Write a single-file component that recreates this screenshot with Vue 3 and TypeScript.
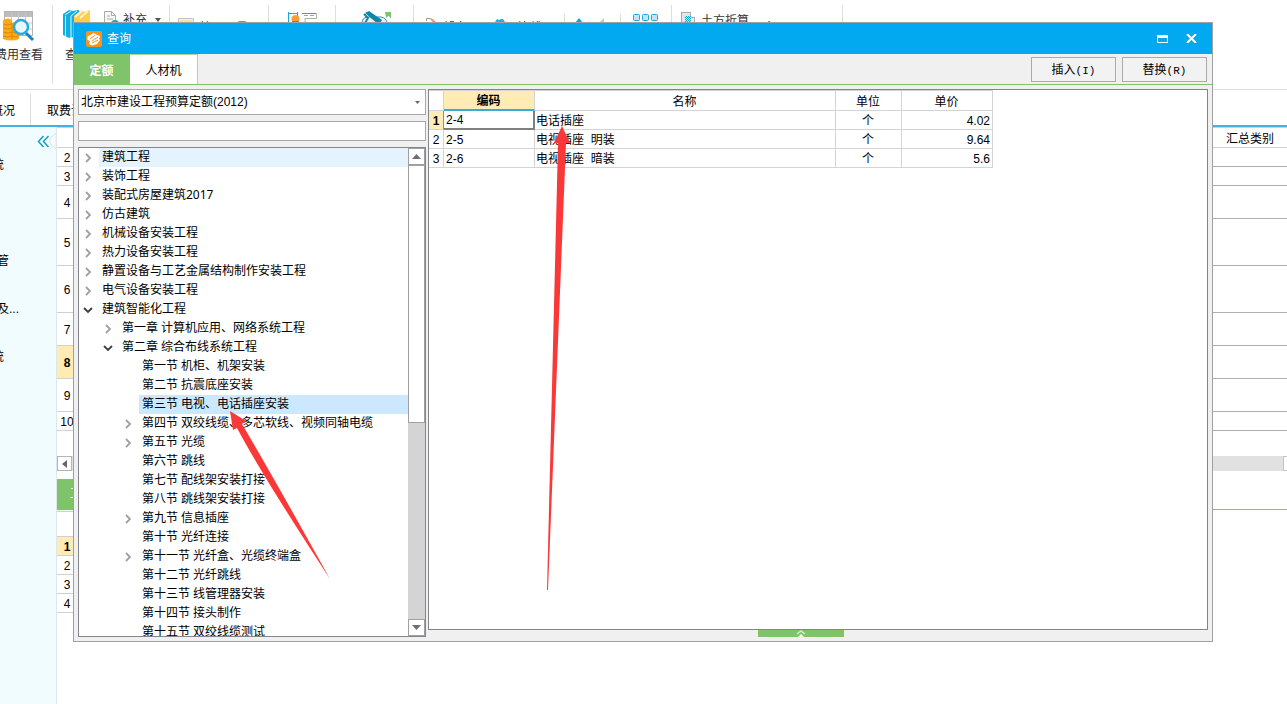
<script setup lang="ts">
import { ref } from 'vue'

interface TreeNode {
  label: string
  level: 1 | 2 | 3
  state: 'open' | 'closed' | 'leaf'
}

interface QuotaItem {
  code: string
  name: string
  unit: string
  price: string
}

interface SheetRow {
  no: number
  size: string
}

const library = ref('北京市建设工程预算定额(2012)')
const keyword = ref('')
const hovered = ref(0)
const selected = ref(13)
const activeRow = ref(0)

const nodes: TreeNode[] = [
  { label: '建筑工程', level: 1, state: 'closed' },
  { label: '装饰工程', level: 1, state: 'closed' },
  { label: '装配式房屋建筑2017', level: 1, state: 'closed' },
  { label: '仿古建筑', level: 1, state: 'closed' },
  { label: '机械设备安装工程', level: 1, state: 'closed' },
  { label: '热力设备安装工程', level: 1, state: 'closed' },
  { label: '静置设备与工艺金属结构制作安装工程', level: 1, state: 'closed' },
  { label: '电气设备安装工程', level: 1, state: 'closed' },
  { label: '建筑智能化工程', level: 1, state: 'open' },
  { label: '第一章 计算机应用、网络系统工程', level: 2, state: 'closed' },
  { label: '第二章 综合布线系统工程', level: 2, state: 'open' },
  { label: '第一节 机柜、机架安装', level: 3, state: 'leaf' },
  { label: '第二节 抗震底座安装', level: 3, state: 'leaf' },
  { label: '第三节 电视、电话插座安装', level: 3, state: 'leaf' },
  { label: '第四节 双绞线缆、多芯软线、视频同轴电缆', level: 3, state: 'closed' },
  { label: '第五节 光缆', level: 3, state: 'closed' },
  { label: '第六节 跳线', level: 3, state: 'leaf' },
  { label: '第七节 配线架安装打接', level: 3, state: 'leaf' },
  { label: '第八节 跳线架安装打接', level: 3, state: 'leaf' },
  { label: '第九节 信息插座', level: 3, state: 'closed' },
  { label: '第十节 光纤连接', level: 3, state: 'leaf' },
  { label: '第十一节 光纤盒、光缆终端盒', level: 3, state: 'closed' },
  { label: '第十二节 光纤跳线', level: 3, state: 'leaf' },
  { label: '第十三节 线管理器安装', level: 3, state: 'leaf' },
  { label: '第十四节 接头制作', level: 3, state: 'leaf' },
  { label: '第十五节 双绞线缆测试', level: 3, state: 'leaf' },
]

const items: QuotaItem[] = [
  { code: '2-4', name: '电话插座', unit: '个', price: '4.02' },
  { code: '2-5', name: '电视插座  明装', unit: '个', price: '9.64' },
  { code: '2-6', name: '电视插座  暗装', unit: '个', price: '5.6' },
]

const sheetRows: SheetRow[] = [
  { no: 2, size: 'small' },
  { no: 3, size: 'small' },
  { no: 4, size: 'medium' },
  { no: 5, size: 'large' },
  { no: 6, size: 'large' },
  { no: 7, size: 'medium' },
  { no: 8, size: 'medium' },
  { no: 9, size: 'medium' },
  { no: 10, size: 'small' },
]
</script>

<template>
  <div class="app">
    <header class="ribbon">
      <div class="group g-fee">
        <button class="big-tool fee" type="button">
          <svg width="34" height="34" viewBox="0 0 34 34">
            <rect x="2.500" y="1.500" width="28" height="24" fill="#fff" stroke="#b4b4b4" />
            <path d="M3 2h27v5H3z" fill="#bdbdbd" />
            <path d="M2 13h28M2 19h28M9.500 2v23M16.500 2v23M23.500 2v23" stroke="#c6c6c6" />
            <path d="M1 10q5-3 9 0v3q4-2 7 0v16q-8 3-16 0z" fill="#fba919" />
            <path d="M1 14q5 2 9 0M1 18q5 2 9 0M1 22q5 2 9 0M1 26q5 2 9 0M10 17q4 2 7 0M10 22q4 2 7 0M10 26q4 2 7 0M10 13v16" stroke="#d98a0a" fill="none" />
            <path d="M24 23l7 7" stroke="#1787bd" stroke-width="3" />
            <circle cx="19" cy="17" r="7" fill="#e6f7fd" stroke="#29abe2" stroke-width="2.500" />
          </svg>
          <span>费用查看</span>
        </button>
      </div>
      <div class="group g-query">
        <button class="big-tool query" type="button">
          <svg width="28" height="34" viewBox="0 0 28 34">
            <path d="M0 4l6-4 4 1 5-1 2 1-5 5v22l-4-1-2 1-6-3z" fill="#12afe3" />
            <path d="M2.500 6v20M8 6v21M2 5l6-4M8 6l6-5" stroke="#d8f4fd" fill="none" />
            <path d="M11 6l8-6 1 2 7-2v20l-9 8-7-2z" fill="#ffcd4d" />
            <path d="M12 7l7-6M17 8l8-7" stroke="#fff3c8" stroke-width="2" />
          </svg>
          <span>查询</span>
        </button>
        <button class="small-tool" type="button">
          <svg width="17" height="16" viewBox="0 0 17 16">
            <path d="M1.500.5h7l4 4V16H1.500z" fill="#f7f7f7" stroke="#aaa" />
            <path d="M8.500.5v4h4M4 5h3M4 8h6" stroke="#aaa" fill="none" />
            <circle cx="12" cy="13" r="4" fill="#1ba8d5" />
          </svg>
          <span>补充</span>
          <svg class="caret" width="6" height="4" viewBox="0 0 6 4"><path d="M0 0h6L3 4z" fill="#555" /></svg>
        </button>
      </div>
      <div class="group g-manage">
        <svg width="18" height="12" viewBox="0 0 18 12">
          <path d="M.5.5h15v11H.5z" fill="#eee" stroke="#c4c4c4" />
          <path d="M2 2h12v5H2z" fill="#f7e2aa" />
        </svg>
        <span class="low">管理用量</span>
      </div>
      <div class="group g-measure">
        <svg width="30" height="14" viewBox="0 0 30 14">
          <path d="M.5 1v13M9.500 1v6M0 2.500h10" stroke="#15a8e0" fill="none" />
          <path d="M14 2.500h14.500v5H17v6" stroke="#b0b0b0" fill="none" />
          <path d="M14 2.500h14" stroke="#15a8e0" />
          <path d="M16 4.500h4M22 4.500h4" stroke="#f09a1a" />
          <circle cx="7.500" cy="8" r="4" fill="#f5a032" />
          <path d="M4 10h7v4H4z" fill="#8b8178" />
        </svg>
      </div>
      <div class="group g-adjust">
        <svg width="32" height="14" viewBox="0 0 32 14">
          <path d="M1 12q0-5 5-6h14q6 1 6 7z" fill="#e8f6fb" stroke="#139bc9" />
          <path d="M4 2l4-2 13 9-3 5z" fill="#0f87a9" />
          <path d="M3 3l4 4-3 5" stroke="#1687a6" stroke-width="2" fill="none" />
          <path d="M24 1h6v7q-1-3-3-3l-2 2z" fill="#7cc36a" />
        </svg>
      </div>
      <div class="group g-device">
        <svg width="13" height="10" viewBox="0 0 13 10">
          <path d="M.5 3V.5h4L12 8" stroke="#999" fill="none" />
          <path d="M5 1l7 6" stroke="#f09a34" stroke-width="2" />
        </svg>
        <span class="low">设备</span>
        <svg class="gear" width="10" height="8" viewBox="0 0 10 8"><path d="M0 8V3l2-3 2 1 2-1 2 0 2 3v5z" fill="#1fb1df" /></svg>
        <span class="low">连线</span>
      </div>
      <div class="group g-move">
        <svg width="32" height="8" viewBox="0 0 32 8">
          <path d="M0 7l4-5 4 5z" fill="#02a9f1" />
          <path d="M24 7l5-5v5z" fill="#c5c5c5" />
        </svg>
      </div>
      <div class="group g-cells">
        <svg width="26" height="8" viewBox="0 0 26 8">
          <g fill="#c5e3f3" stroke="#1ba9df">
            <rect x=".5" y=".5" width="6" height="6" rx="1" /><rect x="9.500" y=".5" width="6" height="6" rx="1" /><rect x="18.500" y=".5" width="6" height="6" rx="1" />
          </g>
        </svg>
      </div>
      <div class="group g-earth">
        <svg width="14" height="14" viewBox="0 0 14 14">
          <rect x=".5" y=".5" width="9" height="13" fill="#e5e5e5" stroke="#aaa" />
          <rect x="9.500" y="5.500" width="4" height="8" fill="#eee" stroke="#aaa" />
          <path d="M4 4h6v10H4z" fill="#b4eafa" />
          <path d="M4 5.500h6M4 7.500h6M4 9.500h6" stroke="#10a4d0" stroke-dasharray="1 1" />
          <path d="M5 4.500h5M5 6.500h5M5 8.500h5" stroke="#10a4d0" stroke-dasharray="1 1" />
        </svg>
        <span>土方折算</span>
        <svg class="drop" width="6" height="6" viewBox="0 0 6 6"><path d="M0 6V3l2-2 3 2v3z" fill="#333" /></svg>
        <span class="low">工具集成</span>
      </div>
    </header>

    <nav class="sheet-tabs">
      <a class="sheet-tab overview" href="#">概况</a>
      <a class="sheet-tab" href="#">取费设置</a>
    </nav>

    <main class="workspace">
      <aside class="side">
        <button class="collapse" type="button" aria-label="收起">
          <svg width="21" height="16" viewBox="0 0 21 16">
            <path d="M21 0l-6 6v4l6 6z" fill="#fff" stroke="#d8e5e8" />
            <path d="M8.500 3L3.500 8.500l5 5.500M13.500 3l-5 5.500 5 5.500" stroke="#139fc8" stroke-width="1.500" fill="none" />
          </svg>
        </button>
        <a class="side-item s1" href="#">系统</a>
        <a class="side-item s2" href="#">配管</a>
        <a class="side-item s3" href="#">及...</a>
        <a class="side-item s4" href="#">系统</a>
      </aside>

      <section class="sheets">
        <table class="sheet">
          <thead>
            <tr><th class="no"></th><th></th><th class="kind">汇总类别</th></tr>
          </thead>
          <tbody>
            <tr v-for="row in sheetRows" :key="row.no" :class="[row.size, { current: row.no === 8 }]">
              <td class="no">{{ row.no }}</td><td></td><td></td>
            </tr>
          </tbody>
        </table>
        <div class="hscroll">
          <button type="button" aria-label="向左滚动">
            <svg width="5" height="8" viewBox="0 0 5 8"><path d="M5 0v8L0 4z" fill="#666" /></svg>
          </button>
          <span class="hthumb"></span>
        </div>
        <div class="detail-tabs"><button type="button">工料机显示</button></div>
        <table class="sheet detail">
          <thead><tr><th class="no"></th><th></th></tr></thead>
          <tbody>
            <tr v-for="n in 4" :key="n" class="small" :class="{ current: n === 1 }">
              <td class="no">{{ n }}</td><td></td>
            </tr>
          </tbody>
        </table>
      </section>
    </main>

    <section class="dialog" role="dialog" aria-label="查询">
      <header class="title-bar">
        <svg width="16" height="16" viewBox="0 0 16 16">
          <rect width="16" height="16" rx="2" fill="#f7941d" />
          <path d="M1.500 5.500L8 2l2 1.500L14 5l-1 3 1 1-3 4-5 1.500L3 13l1-3-2.500-1z" fill="#fff" />
          <path d="M4 8l5-4M6 10l6-4M6 12l6-3" stroke="#f7941d" />
        </svg>
        <h1>查询</h1>
        <button type="button" aria-label="最大化">
          <svg width="11" height="8" viewBox="0 0 11 8"><path d="M.5.5h10v7H.5z" fill="none" stroke="#fff" /><path d="M0 0h11v3H0z" fill="#fff" /></svg>
        </button>
        <button type="button" aria-label="关闭">
          <svg width="11" height="9" viewBox="0 0 11 9"><path d="M1 0l9 9M10 0L1 9" stroke="#fff" stroke-width="2" /></svg>
        </button>
      </header>

      <div class="tab-bar">
        <button class="tab on" type="button">定额</button>
        <button class="tab" type="button">人材机</button>
        <span class="spring"></span>
        <button class="action" type="button">插入<span>(I)</span></button>
        <button class="action" type="button">替换<span>(R)</span></button>
      </div>

      <div class="body">
        <div class="left">
          <div class="combo">
            <select v-model="library" aria-label="定额库">
              <option>北京市建设工程预算定额(2012)</option>
            </select>
            <svg width="5" height="3" viewBox="0 0 5 3"><path d="M0 0h5L2.500 3z" fill="#666" /></svg>
          </div>
          <input v-model="keyword" class="search" type="text" aria-label="查找">
          <div class="tree-box">
            <ul class="tree" role="tree">
              <li
                v-for="(node, i) in nodes"
                :key="node.label"
                role="treeitem"
                :class="['level' + node.level, { hovered: i === hovered, selected: i === selected }]"
                @click="selected = i"
              >
                <span class="toggle">
                  <svg v-if="node.state === 'closed'" width="10" height="10" viewBox="0 0 10 10"><path d="M3 1l4 4-4 4" fill="none" stroke="#a0a0a0" stroke-width="1.800" /></svg>
                  <svg v-else-if="node.state === 'open'" width="10" height="10" viewBox="0 0 10 10"><path d="M1 3l4 4 4-4" fill="none" stroke="#404040" stroke-width="1.900" /></svg>
                </span>
                <span class="label">{{ node.label }}</span>
              </li>
            </ul>
            <div class="vscroll">
              <button type="button" aria-label="向上滚动">
                <svg width="9" height="5" viewBox="0 0 9 5"><path d="M0 5h9L4.500 0z" fill="#6b6f7d" /></svg>
              </button>
              <span class="vthumb"></span>
              <span class="track"></span>
              <button type="button" aria-label="向下滚动">
                <svg width="9" height="5" viewBox="0 0 9 5"><path d="M0 0h9L4.500 5z" fill="#6b6f7d" /></svg>
              </button>
            </div>
          </div>
        </div>

        <div class="right">
          <div class="grid-box">
            <table class="grid">
              <thead>
                <tr><th class="c-no"></th><th class="c-code">编码</th><th class="c-name">名称</th><th class="c-unit">单位</th><th class="c-price">单价</th></tr>
              </thead>
              <tbody>
                <tr v-for="(item, i) in items" :key="item.code" :class="{ active: i === activeRow }" @click="activeRow = i">
                  <td class="c-no">{{ i + 1 }}</td>
                  <td class="c-code">{{ item.code }}</td>
                  <td class="c-name">{{ item.name }}</td>
                  <td class="c-unit">{{ item.unit }}</td>
                  <td class="c-price">{{ item.price }}</td>
                </tr>
              </tbody>
            </table>
          </div>
          <button class="expander" type="button" aria-label="展开">
            <svg width="10" height="7" viewBox="0 0 10 7"><path d="M1 4l4-3 4 3" fill="none" stroke="#d5edcd" stroke-width="1.500" /><path d="M2 7l3-3 3 3z" fill="#fff" /></svg>
          </button>
        </div>
      </div>
    </section>

    <svg class="pointers" width="600" height="600" viewBox="0 0 600 600">
      <g fill="#fb3838">
        <path d="M230 411L246 421 242 424Q275 480 330 579Q262 475 237 428L233 430z" />
        <path d="M562 126L570 143H566L548 590H547L558 143H554z" />
      </g>
    </svg>
  </div>
</template>

<style>
body {
  margin: 0;
}
</style>

<style scoped>
* {
  box-sizing: border-box;
}

.app {
  position: relative;
  display: flex;
  flex-direction: column;
  min-height: 100vh;
  overflow: hidden;
  background: #fff;
  color: #000;
  font: 12px/18px "Liberation Sans", "Noto Sans CJK SC", sans-serif;
}

button {
  padding: 0;
  border: 0;
  background: none;
  color: inherit;
  font: inherit;
}

a {
  color: inherit;
  text-decoration: none;
}

svg {
  display: block;
  flex: none;
}

h1 {
  margin: 0;
  font: inherit;
}

/* ribbon */
.ribbon {
  display: flex;
  height: 90px;
  padding-top: 5px;
  border-bottom: 1px solid #dedede;
  overflow: hidden;
  color: #333;
  white-space: nowrap;
}

.group {
  display: flex;
  flex: none;
  align-items: flex-start;
  height: 79px;
  border-right: 1px solid #dedede;
  overflow: hidden;
}

.low {
  margin-top: 14px;
}

.g-fee { width: 53px; }
.g-query { width: 117px; padding-left: 10px; gap: 14px; }
.g-manage { width: 99px; padding-left: 8px; gap: 4px; }
.g-manage svg { margin-top: 13px; }
.g-measure { width: 67px; padding: 6px 0 0 19px; }
.g-adjust { width: 78px; padding: 6px 0 0 25px; }
.g-device { width: 151px; padding-left: 12px; gap: 5px; }
.g-device svg { margin-top: 13px; }
.g-device .gear { margin: 14px 8px 0 22px; }
.g-move,
.g-cells { height: 70px; margin-top: 9px; border-right: 0; border-left: 1px solid #dedede; }
.g-device { border-right: 0; }
.g-move { width: 56px; margin-left: -1px; padding: 2px 0 0 10px; }
.g-cells { width: 51px; padding: 0 0 0 12px; }
.g-earth { width: 172px; padding: 7px 0 0 9px; gap: 6px; border-left: 1px solid #dedede; }
.g-earth .low { margin-top: 8px; }
.g-earth .drop { margin: 8px 2px 0 12px; }

.big-tool {
  display: flex;
  flex-direction: column;
  gap: 2px;
  height: 60px;
  padding-top: 5px;
}

.fee svg { margin-left: 2px; }
.fee span { margin-left: -5px; }
.query { width: 28px; }
.g-query { gap: 12px; }

.small-tool {
  display: flex;
  gap: 3px;
  margin-top: 6px;
}

.small-tool .caret {
  margin: 7px 0 0 5px;
}

/* sheet tabs */
.sheet-tabs {
  display: flex;
  height: 37px;
  padding-top: 4px;
  border-bottom: 2px solid #3fb4e4;
  white-space: nowrap;
}

.sheet-tab {
  padding: 8px 16px;
}

.overview {
  display: flex;
  justify-content: flex-end;
  width: 31px;
  padding: 8px 15px 8px 0;
  border-right: 1px solid #dedede;
}

/* workspace */
.workspace {
  display: flex;
  flex: 1;
}

.side {
  display: flex;
  flex: none;
  flex-direction: column;
  align-items: flex-start;
  width: 57px;
  border-right: 1px solid #dce8ea;
  background: #f0fcff;
}

.collapse {
  align-self: flex-end;
  margin-top: 6px;
}

.side-item {
  display: flex;
  justify-content: flex-end;
  overflow: hidden;
  white-space: nowrap;
}

.s1, .s4 { width: 4px; }
.s1 { margin-top: 7px; }
.s2 { width: 9px; margin-top: 78px; }
.s3 { width: 19px; margin-top: 30px; }
.s4 { margin-top: 30px; }

.sheets {
  flex: 1;
  min-width: 0;
}

.sheet {
  width: 100%;
  border-top: 1px solid #d0d0d0;
  border-spacing: 0;
  table-layout: fixed;
}

.sheet th,
.sheet td {
  height: 19px;
  padding: 2px 0 0;
  border-bottom: 1px solid #b0b0b0;
  font-weight: normal;
  line-height: 16px;
}

.sheet th { height: 20px; border-color: #d0d0d0; }
.sheet .kind { width: 74px; }
.sheet .medium td { height: 33px; }
.sheet .large td { height: 47px; }

.sheet .no {
  width: 21px;
  border-right: 1px solid #d0d0d0;
  border-bottom-color: #d0d0d0;
  text-align: center;
}

.sheet .current .no {
  background: #ffebb4;
  font-weight: bold;
}

.hscroll {
  display: flex;
  height: 15px;
  margin-top: 25px;
  background: #e1e1e1;
}

.hscroll button {
  width: 15px;
  padding: 3px 4px;
  border: 1px solid #b4b4b4;
  background: #fff;
}

.hthumb {
  width: 4px;
  margin-left: auto;
  border: 1px solid #c4c4c4;
  border-right: 0;
  background: #fff;
}

.detail-tabs {
  display: flex;
  margin-top: 8px;
  border-bottom: 1px solid #7fc36a;
}

.detail-tabs button {
  height: 30px;
  padding: 0 13px;
  background: #7fc36a;
  color: #fff;
}

.detail {
  width: 50%;
  margin-top: 1px;
}

.detail th {
  height: 25px;
}

/* dialog window */
.dialog {
  position: absolute;
  inset: 22px 74px 62px 73px;
  display: flex;
  flex-direction: column;
  border: 1px solid #a0a0a0;
  background: #f0f0f0;
}

.title-bar {
  display: flex;
  flex: none;
  align-items: center;
  height: 31px;
  padding: 0 15px 0 12px;
  background: #02a9f1;
  color: #fff;
}

.title-bar h1 {
  flex: 1;
  margin-left: 5px;
}

.title-bar button + button {
  margin-left: 18px;
}

.tab-bar {
  display: flex;
  flex: none;
  height: 31px;
  padding-right: 5px;
  border-bottom: 1px solid #7fc36a;
}

.tab {
  width: 68px;
  padding-top: 2px;
  border-top: 1px solid #a9dc9a;
  border-right: 1px solid #a9dc9a;
  background: #fff;
}

.tab.on {
  width: 56px;
  border-color: #7fc36a;
  background: #7fc36a;
  color: #fff;
  font-weight: bold;
}

.spring {
  flex: 1;
}

.action {
  width: 85px;
  height: 25px;
  margin: 3px 0 0 6px;
  padding-top: 1px;
  border: 1px solid #aaa;
  background: #f2f2f2;
}

.action span {
  font-family: "Liberation Mono", monospace;
  font-size: 11px;
}

.body {
  display: flex;
  flex: 1;
  gap: 2px;
  min-height: 0;
  padding: 4px;
}

.left {
  display: flex;
  flex: none;
  flex-direction: column;
  gap: 6px;
  width: 348px;
}

.combo {
  display: flex;
  align-items: center;
  height: 26px;
  padding-right: 5px;
  border: 1px solid #a8a8a8;
  background: #fff;
}

.combo select {
  flex: 1;
  height: 24px;
  padding: 0 2px;
  border: 0;
  appearance: none;
  background: none;
  color: inherit;
  font: inherit;
}

.search {
  width: 100%;
  height: 20px;
  padding: 0 3px;
  border: 1px solid #a8a8a8;
  background: #fff;
  font: inherit;
}

.tree-box {
  display: flex;
  flex: 1;
  min-height: 0;
  border: 1px solid #82868c;
  background: #fff;
}

.tree {
  flex: 1;
  margin: 0;
  padding: 0;
  overflow: hidden;
  list-style: none;
  font-family: "Noto Sans", "Noto Sans CJK SC", sans-serif;
}

.tree li {
  display: flex;
  align-items: center;
  height: 19px;
  white-space: nowrap;
}

.level2 { padding-left: 20px; }
.level3 { padding-left: 40px; }

.toggle {
  width: 20px;
  padding-left: 4px;
}

.label {
  flex: 1;
  padding: 0 0 2px 3px;
  line-height: 17px;
}

.hovered .label { background: #e5f3ff; }
.selected .label { background: #cce8ff; }

.vscroll {
  display: flex;
  flex: none;
  flex-direction: column;
  width: 17px;
  background: #d4d4d4;
}

.vscroll button {
  display: grid;
  flex: none;
  place-items: center;
  height: 17px;
  border: 1px solid #a0a0a0;
  background: #fff;
}

.vthumb {
  flex: 257;
  border: 1px solid #a0a0a0;
  background: #fff;
}

.track {
  flex: 197;
}

.right {
  display: flex;
  flex: 1;
  flex-direction: column;
  min-width: 0;
}

.grid-box {
  flex: 1;
  border: 1px solid #82868c;
  background: #fff;
}

.grid {
  width: 564px;
  border-spacing: 0;
  border-top: 1px solid #d4d4d4;
  table-layout: fixed;
}

.grid th,
.grid td {
  height: 19px;
  padding: 2px 2px 0 1px;
  border-right: 1px solid #d4d4d4;
  border-bottom: 1px solid #d4d4d4;
  font-weight: normal;
  line-height: 16px;
  text-align: center;
  white-space: pre;
}

.grid th { height: 20px; }
.grid .c-no { width: 15px; padding: 2px 0 0; }
.grid .c-code { width: 91px; }
.grid .c-name { width: 301px; }
.grid .c-unit { width: 66px; }
.grid .c-price { width: 91px; }
.grid td.c-code,
.grid td.c-name { text-align: left; }
.grid td.c-code { padding-left: 2px; }
.grid td.c-price { text-align: right; }

.grid th.c-code {
  border-bottom: 2px solid #3ca9d6;
  background: #ffebb4;
  font-weight: bold;
}

.grid .active .c-no {
  border-right: 1px solid #3ca9d6;
  background: #ffebb4;
  font-weight: bold;
}

.grid .active .c-code {
  padding-top: 1px;
  border-right: 2px solid #808080;
  border-bottom: 2px solid #808080;
}

.expander {
  display: flex;
  flex: none;
  justify-content: center;
  align-self: center;
  width: 86px;
  height: 7px;
  margin-right: 34px;
  background: #7fc36a;
}

.pointers {
  position: absolute;
  top: 0;
  left: 0;
  pointer-events: none;
}
</style>
